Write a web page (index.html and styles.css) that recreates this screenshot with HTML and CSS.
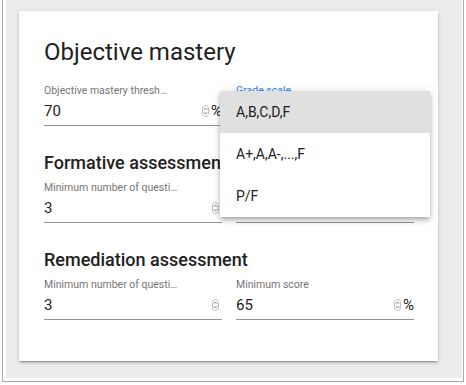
FILE: index.html
```html
<!DOCTYPE html>
<html lang="en">
<head>
  <meta charset="UTF-8" />
  <title>Mastery settings</title>
  <link rel="stylesheet" href="styles.css">
</head>
<body>
  <div class="shot">
    <div class="stage">
      <section class="card">
        <h1 class="title">Objective mastery</h1>

        <div class="row">
          <div class="field has-suffix">
            <label class="label">Objective mastery threshold</label>
            <div class="control">
              <span class="value">70</span>
              <svg class="spin" width="7" height="12" viewBox="0 0 7 12"><rect x="0.5" y="0.5" width="6" height="11" rx="3" fill="none" stroke="#bdbdbd"/><path d="M2 4.6L3.5 3.1L5 4.6M2 7.4L3.5 8.9L5 7.4" fill="none" stroke="#555" stroke-width="0.9"/></svg>
              <span class="suffix">%</span>
            </div>
          </div>

          <div class="field select-field">
            <label class="label focused">Grade scale</label>
            <div class="control">
              <span class="value">A,B,C,D,F</span>
            </div>
            <ul class="menu">
              <li class="active">A,B,C,D,F</li>
              <li>A+,A,A-,...,F</li>
              <li>P/F</li>
            </ul>
          </div>
        </div>

        <h2 class="section-title">Formative assessment</h2>
        <div class="row">
          <div class="field">
            <label class="label">Minimum number of questions</label>
            <div class="control">
              <span class="value">3</span>
              <svg class="spin" width="7" height="12" viewBox="0 0 7 12"><rect x="0.5" y="0.5" width="6" height="11" rx="3" fill="none" stroke="#bdbdbd"/><path d="M2 4.6L3.5 3.1L5 4.6M2 7.4L3.5 8.9L5 7.4" fill="none" stroke="#555" stroke-width="0.9"/></svg>
            </div>
          </div>
          <div class="field has-suffix">
            <label class="label">Minimum score</label>
            <div class="control">
              <span class="value">80</span>
              <svg class="spin" width="7" height="12" viewBox="0 0 7 12"><rect x="0.5" y="0.5" width="6" height="11" rx="3" fill="none" stroke="#bdbdbd"/><path d="M2 4.6L3.5 3.1L5 4.6M2 7.4L3.5 8.9L5 7.4" fill="none" stroke="#555" stroke-width="0.9"/></svg>
              <span class="suffix">%</span>
            </div>
          </div>
        </div>

        <h2 class="section-title">Remediation assessment</h2>
        <div class="row">
          <div class="field">
            <label class="label">Minimum number of questions</label>
            <div class="control">
              <span class="value">3</span>
              <svg class="spin" width="7" height="12" viewBox="0 0 7 12"><rect x="0.5" y="0.5" width="6" height="11" rx="3" fill="none" stroke="#bdbdbd"/><path d="M2 4.6L3.5 3.1L5 4.6M2 7.4L3.5 8.9L5 7.4" fill="none" stroke="#555" stroke-width="0.9"/></svg>
            </div>
          </div>
          <div class="field has-suffix">
            <label class="label">Minimum score</label>
            <div class="control">
              <span class="value">65</span>
              <svg class="spin" width="7" height="12" viewBox="0 0 7 12"><rect x="0.5" y="0.5" width="6" height="11" rx="3" fill="none" stroke="#bdbdbd"/><path d="M2 4.6L3.5 3.1L5 4.6M2 7.4L3.5 8.9L5 7.4" fill="none" stroke="#555" stroke-width="0.9"/></svg>
              <span class="suffix">%</span>
            </div>
          </div>
        </div>
      </section>
    </div>
  </div>
</body>
</html>
```

FILE: styles.css
```css
/* Reset */
* {
  box-sizing: border-box;
  margin: 0;
  padding: 0;
}

body {
  font-family: Roboto, 'Noto Sans', sans-serif;
  background: white;
  color: #212121;
}

/* Window frame around the page */
.shot {
  margin-left: 2px;
  width: 462px;
  height: 382px;
  border: 1px solid #a8a8a8;
  border-top: none;
  padding: 0 1px 3px 3px;
}

.stage {
  height: 100%;
  background: #ececec;
  padding: 11px 24px 0 13px;
}

.card {
  width: 419px;
  height: 350px;
  background: white;
  padding: 25px 24px 40px 25px;
  box-shadow: 0 3px 1px -2px rgba(0, 0, 0, 0.2), 0 2px 2px 0 rgba(0, 0, 0, 0.14), 0 1px 5px 0 rgba(0, 0, 0, 0.12);
}

.title {
  font-size: 24px;
  font-weight: 400;
  line-height: 32px;
}

.section-title {
  margin-top: 25px;
  font-size: 18px;
  font-weight: 500;
  line-height: 24px;
}

.row {
  display: grid;
  grid-template-columns: 178px 178px;
  column-gap: 14px;
  margin-top: 5px;
}

.title + .row {
  margin-top: 15px;
}

/* Form fields */
.field {
  position: relative;
  display: flex;
  flex-direction: column;
  gap: 2px;
  padding-bottom: 4px;
  border-bottom: 1px solid #949494;
}

.label {
  display: block;
  max-width: 134px;
  font-size: 10.5px;
  line-height: 16px;
  color: #757575;
  white-space: nowrap;
  overflow: hidden;
  text-overflow: ellipsis;
}

.has-suffix .label {
  max-width: 124px;
}

.label.focused {
  color: #1e88e5;
}

.control {
  display: flex;
  align-items: center;
  height: 20px;
  font-size: 15px;
  line-height: 20px;
}

.value {
  flex: 1;
}

.spin {
  margin-right: 3px;
}

.suffix {
  margin-left: -1px;
}

/* Open select panel */
.menu {
  position: absolute;
  top: 8px;
  left: -16px;
  width: 210px;
  list-style: none;
  background: white;
  z-index: 10;
  box-shadow: 0 2px 4px -1px rgba(0, 0, 0, 0.2), 0 4px 5px 0 rgba(0, 0, 0, 0.14), 0 1px 10px 0 rgba(0, 0, 0, 0.12);
}

.menu li {
  height: 42px;
  line-height: 42px;
  padding-left: 16px;
  font-size: 14px;
  color: #212121;
}

.menu li.active {
  background: #e0e0e0;
}
```
